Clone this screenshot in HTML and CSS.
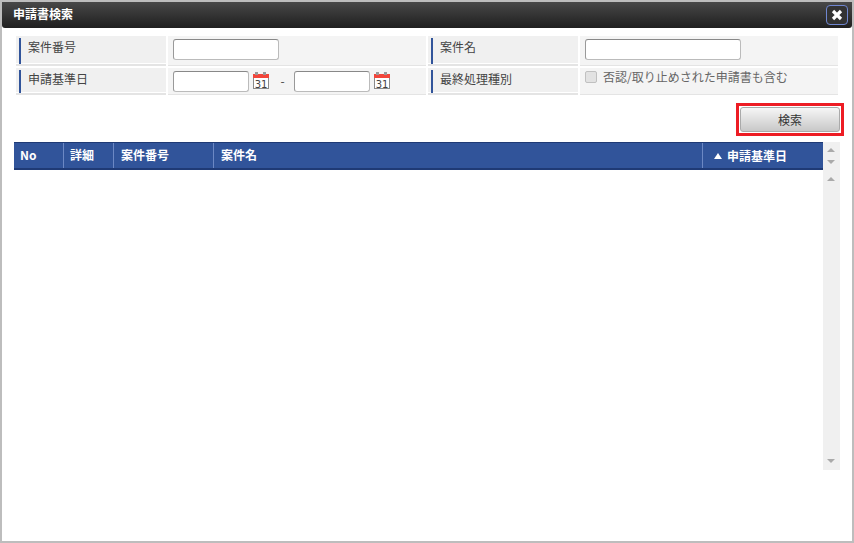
FILE: index.html
```html
<!DOCTYPE html>
<html lang="ja">
  <head>
    <meta charset="UTF-8" />
    <title>申請書検索</title>
    <link rel="stylesheet" href="styles.css">
  </head>
  <body>
    <div class="dialog">
      <div class="titlebar">
        <span class="title">申請書検索</span>
        <button class="close-btn" type="button">
          <svg width="12" height="12" viewBox="0 0 12 12"><path d="M2 2l8 8M10 2l-8 8" stroke="#fff" stroke-width="3.2" /></svg>
        </button>
      </div>

      <div class="content">
        <form class="search-form">
          <div class="label first"><span>案件番号</span></div>
          <div class="value first"><input class="text-input w-number" type="text" /></div>
          <div class="label first"><span>案件名</span></div>
          <div class="value first"><input class="text-input w-name" type="text" /></div>

          <div class="label"><span>申請基準日</span></div>
          <div class="value">
            <input class="text-input w-date" type="text" />
            <svg class="cal" width="16" height="17" viewBox="0 0 16 17">
              <rect x="0.5" y="3.5" width="15" height="13" fill="#fff" stroke="#8a8a8a" />
              <rect x="0" y="2" width="16" height="4" fill="#f2453a" />
              <rect x="2" y="0" width="3" height="3" fill="#999" />
              <rect x="10" y="0" width="3" height="3" fill="#999" />
              <text x="8" y="15.5" text-anchor="middle" class="cal-day">31</text>
            </svg>
            <span class="dash">-</span>
            <input class="text-input w-date" type="text" />
            <svg class="cal" width="16" height="17" viewBox="0 0 16 17">
              <rect x="0.5" y="3.5" width="15" height="13" fill="#fff" stroke="#8a8a8a" />
              <rect x="0" y="2" width="16" height="4" fill="#f2453a" />
              <rect x="2" y="0" width="3" height="3" fill="#999" />
              <rect x="10" y="0" width="3" height="3" fill="#999" />
              <text x="8" y="15.5" text-anchor="middle" class="cal-day">31</text>
            </svg>
          </div>
          <div class="label"><span>最終処理種別</span></div>
          <div class="value check-cell">
            <span class="checkbox"></span>
            <span class="check-text">否認/取り止めされた申請書も含む</span>
          </div>
        </form>

        <div class="actions">
          <div class="highlight">
            <button class="search-btn" type="button">検索</button>
          </div>
        </div>

        <div class="results">
          <div class="grid-main">
            <div class="grid-head">
              <div class="col col-no">No</div>
              <div class="col col-detail">詳細</div>
              <div class="col col-number">案件番号</div>
              <div class="col col-name">案件名</div>
              <div class="col col-date"><span class="sort-arrow"></span>申請基準日</div>
            </div>
          </div>
          <div class="scrollbar">
            <span class="arrow up"></span>
            <span class="arrow down"></span>
            <span class="arrow up third"></span>
            <span class="arrow down last"></span>
          </div>
        </div>
      </div>
    </div>
  </body>
</html>
```

FILE: styles.css
```css
html,
body {
  margin: 0;
  height: 100%;
}

body {
  font-family: "Noto Sans CJK JP", "Liberation Sans", sans-serif;
  font-size: 12px;
  color: #444;
  background: #fff;
}

.dialog {
  box-sizing: border-box;
  height: 543px;
  border: 2px solid #bdbdbd;
  background: #fff;
  display: flex;
  flex-direction: column;
}

.titlebar {
  height: 26px;
  flex: none;
  display: flex;
  align-items: center;
  justify-content: space-between;
  padding: 0 4px 0 12px;
  border-radius: 0 0 3px 3px;
  background: linear-gradient(#484848, #1f1f1f);
}

.title {
  color: #fff;
  font-weight: bold;
  line-height: 24px;
  margin: -2px 0 0 -1px;
}

.close-btn {
  box-sizing: border-box;
  width: 22px;
  height: 20px;
  padding: 0;
  display: flex;
  align-items: center;
  justify-content: center;
  background: #333;
  border: 1px solid #6f86d0;
  border-radius: 4px;
}

.content {
  padding: 8px 0 0 12px;
}

.search-form {
  width: 822px;
  margin-left: 2px;
  display: grid;
  grid-template-columns: 150px 258px 150px 258px;
  grid-template-rows: 30px 27px;
  column-gap: 2px;
  row-gap: 2px;
}

.label {
  background: #f0f0f0;
  border-bottom: 2px solid #e4e4e4;
  box-shadow: inset 0 -1px 0 #fff;
  padding: 2px 0 0 3px;
  box-sizing: border-box;
}

.label span {
  display: block;
  height: 23px;
  line-height: 18px;
  padding-left: 7px;
  border-left: 2px solid #31549a;
}

.label.first span {
  height: 26px;
}

.value {
  background: #f4f4f4;
  border-bottom: 1px solid #e4e4e4;
  box-sizing: border-box;
  display: flex;
  align-items: flex-start;
  padding: 3px 0 0 5px;
}

.text-input {
  box-sizing: border-box;
  height: 21px;
  margin: 0;
  padding: 0 4px;
  background: #fff;
  border: 1px solid #bbb;
  border-top-color: #888;
  border-left-color: #999;
  border-radius: 3px;
}

.w-number {
  width: 106px;
}

.w-name {
  width: 156px;
}

.w-date {
  width: 76px;
}

.cal {
  margin: 1px 0 0 4px;
  flex: none;
}

.cal-day {
  font-family: "DejaVu Sans", sans-serif;
  font-size: 10px;
  fill: #444;
}

.dash {
  box-sizing: border-box;
  width: 25px;
  padding-left: 2px;
  text-align: center;
  line-height: 20px;
}

.check-cell {
  align-items: flex-start;
  gap: 6px;
  padding: 0 0 0 5px;
}

.checkbox {
  box-sizing: border-box;
  width: 12px;
  height: 12px;
  margin-top: 3px;
  background: #e2e2e2;
  border: 1px solid #c0c0c0;
  border-radius: 2px;
}

.check-text {
  color: #666;
  line-height: 18px;
}

.actions {
  display: flex;
  justify-content: flex-end;
  width: 830px;
  margin-top: 8px;
}

.highlight {
  border: 3px solid #ed1c24;
  padding: 1px;
  height: 33px;
  box-sizing: border-box;
}

.search-btn {
  display: block;
  box-sizing: border-box;
  width: 100px;
  height: 25px;
  padding: 0;
  font: inherit;
  line-height: 22px;
  color: #333;
  background: linear-gradient(#f6f6f6, #c8c8c8);
  border: 1px solid #aaa;
  border-radius: 3px;
}

.results {
  display: flex;
  margin-top: 6px;
}

.grid-main {
  width: 809px;
}

.grid-head {
  box-sizing: border-box;
  height: 28px;
  display: flex;
  background: #31549a;
  border-top: 1px solid #1f3a75;
  border-bottom: 2px solid #1f3a75;
  color: #fff;
  font-weight: bold;
  line-height: 23px;
}

.col {
  box-sizing: border-box;
  padding-left: 6px;
  border-right: 1px solid #6c88c4;
  height: 25px;
}

.col-no {
  width: 50px;
}

.col-detail {
  width: 50px;
}

.col-number {
  width: 100px;
  padding-left: 7px;
}

.col-name {
  width: 489px;
  padding-left: 7px;
}

.col-date {
  flex: 1;
  border-right: none;
  padding-left: 11px;
  display: flex;
  align-items: center;
}

.sort-arrow {
  width: 0;
  height: 0;
  margin-right: 5px;
  border-left: 4px solid transparent;
  border-right: 4px solid transparent;
  border-bottom: 6px solid #fff;
}

.scrollbar {
  position: relative;
  width: 17px;
  height: 328px;
  background: #f0f0f0;
}

.arrow {
  position: absolute;
  left: 4px;
  width: 0;
  height: 0;
  border-left: 4px solid transparent;
  border-right: 4px solid transparent;
}

.arrow.up {
  top: 6px;
  border-bottom: 4px solid #aaa;
}

.arrow.down {
  top: 18px;
  border-top: 4px solid #aaa;
}

.arrow.up.third {
  top: 35px;
}

.arrow.down.last {
  top: 317px;
}
```
